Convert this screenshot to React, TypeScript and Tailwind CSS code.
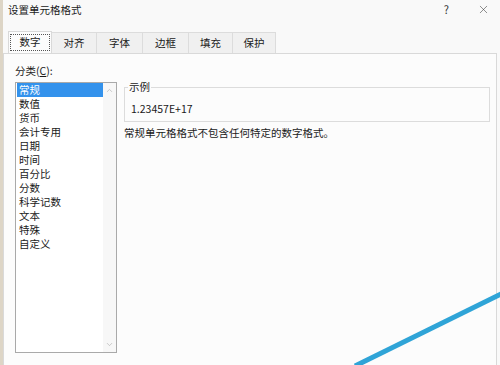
import { ChevronDown, ChevronUp, X } from "lucide-react";

const tabs = [
  { label: "数字", w: "w-[44px]" },
  { label: "对齐", w: "w-[45px]" },
  { label: "字体", w: "w-[46px]" },
  { label: "边框", w: "w-[46px]" },
  { label: "填充", w: "w-[44px]" },
  { label: "保护", w: "w-[43px]" },
];

const categories = [
  "常规",
  "数值",
  "货币",
  "会计专用",
  "日期",
  "时间",
  "百分比",
  "分数",
  "科学记数",
  "文本",
  "特殊",
  "自定义",
];

export default function App() {
  return (
    <div className="relative w-[500px] h-[365px] overflow-hidden bg-[#f9f9f9] border-l-[3px] border-[#ddd5c6] text-[10.5px] text-[#1a1a1a] font-['Noto_Sans_CJK_SC','Noto_Sans',sans-serif]">
      {/* title bar */}
      <div className="flex items-start h-[32px] pl-[5px] pr-[10px]">
        <span className="leading-[20px] text-[10.5px]">设置单元格格式</span>
        <span className="ml-auto mr-[28px] leading-[18px] text-[11px] text-[#333]">?</span>
        <X size={13} strokeWidth={1} className="mt-[3px] text-[#333]" />
      </div>

      {/* tabs */}
      <div className="flex h-[21px] ml-[5px]">
        {tabs.map((t, i) => (
          <div
            key={t.label}
            className={
              i === 0
                ? `${t.w} flex items-center justify-center bg-[#fcfcfc] border border-b-0 border-[#d9d9d9] relative z-10 h-[22px] -mt-[1px]`
                : `${t.w} flex items-center justify-center bg-[#f0f0f0] border border-l-0 border-b-0 border-[#dcdcdc]`
            }
          >
            {i === 0 ? (
              <span className="flex items-center justify-center w-[40px] h-[17px] border border-dotted border-[#555] leading-none">
                {t.label}
              </span>
            ) : (
              <span className="leading-none">{t.label}</span>
            )}
          </div>
        ))}
      </div>

      {/* panel */}
      <div className="w-[494px] h-[320px] bg-[#fcfcfc] border border-[#d9d9d9]">
        <div className="pl-[11px] pt-[9px] leading-[16px]">
          分类(<span className="underline">C</span>):
        </div>
        <div className="flex pl-[11px] pt-[3px]">
          {/* list box */}
          <div className="flex w-[102px] h-[271px] bg-white border border-[#a9a9a9]">
            <div className="flex-1 pl-px">
              {categories.map((c, i) => (
                <div
                  key={c}
                  className={
                    i === 0
                      ? "h-[14px] leading-[14px] pl-[2px] bg-[#3392ec] text-white"
                      : "h-[14px] leading-[14px] pl-[2px]"
                  }
                >
                  {c}
                </div>
              ))}
            </div>
            <div className="flex flex-col items-center justify-between w-[13px] bg-[#f7f7f7] py-[3px]">
              <ChevronUp size={9} strokeWidth={1.5} className="text-[#a6a6a6]" />
              <ChevronDown size={9} strokeWidth={1.5} className="text-[#a6a6a6]" />
            </div>
          </div>

          {/* right column */}
          <div className="ml-[7px] pt-[5px]">
            <div className="relative w-[366px] h-[35px] border border-[#dcdcdc]">
              <span className="absolute -top-[9px] left-[3px] px-px bg-[#fcfcfc] leading-[16px]">
                示例
              </span>
              <div className="pl-[6px] pt-[13px] leading-[16px]">1.23457E+17</div>
            </div>
            <div className="pt-[3px] leading-[16px]">
              常规单元格格式不包含任何特定的数字格式。
            </div>
          </div>
        </div>
      </div>

      {/* watermark stripe */}
      <svg className="absolute inset-0 pointer-events-none" width="500" height="365" viewBox="0 0 500 365">
        <line x1="352" y1="366" x2="500" y2="293" stroke="#2fa4d7" strokeWidth="5" />
      </svg>
    </div>
  );
}
